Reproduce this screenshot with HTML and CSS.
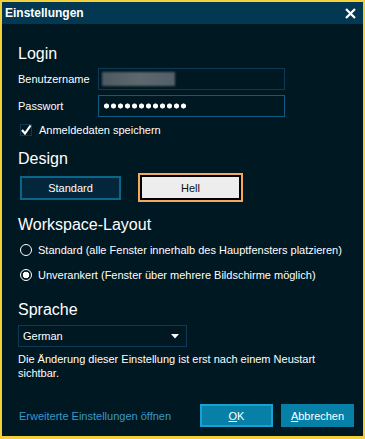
FILE: index.html
```html
<!DOCTYPE html>
<html lang="de">
  <head>
    <title>Einstellungen</title>
    <link rel="stylesheet" href="styles.css">
  </head>

  <body>
    <div class="window">
      <div class="titlebar">
        <span class="title">Einstellungen</span>
        <svg class="close" width="11" height="11" viewBox="0 0 11 11">
          <path d="M1 1 L10 10 M10 1 L1 10" stroke="#fff" stroke-width="2.2" />
        </svg>
      </div>

      <div class="content">
        <h2 class="heading first">Login</h2>
        <div class="form">
          <div class="form-row">
            <label for="username">Benutzername</label>
            <div class="input" id="username"><span class="blurred"></span></div>
          </div>
          <div class="form-row">
            <label for="password">Passwort</label>
            <div class="input focused" id="password"><span class="dots"></span></div>
          </div>
        </div>
        <div class="check-row">
          <span class="checkbox">
            <svg width="12" height="12" viewBox="0 0 12 12">
              <path d="M2 6 L5 9.5 L10.5 1.5" stroke="#fff" stroke-width="2.2" fill="none" />
            </svg>
          </span>
          <span>Anmeldedaten speichern</span>
        </div>

        <h2 class="heading">Design</h2>
        <div class="theme-row">
          <button class="theme-btn">Standard</button>
          <button class="theme-btn active">Hell</button>
        </div>

        <h2 class="heading workspace">Workspace-Layout</h2>
        <div class="radio-list">
          <div class="radio-row">
            <span class="radio"></span>
            <span>Standard (alle Fenster innerhalb des Hauptfensters platzieren)</span>
          </div>
          <div class="radio-row">
            <span class="radio checked"></span>
            <span>Unverankert (Fenster über mehrere Bildschirme möglich)</span>
          </div>
        </div>

        <h2 class="heading language">Sprache</h2>
        <div class="select">
          <span>German</span>
          <svg width="8" height="5" viewBox="0 0 8 5">
            <path d="M0 0 L8 0 L4 4.5 Z" fill="#fff" />
          </svg>
        </div>
        <p class="note">Die Änderung dieser Einstellung ist erst nach einem Neustart sichtbar.</p>

        <div class="footer">
          <a href="#" class="advanced">Erweiterte Einstellungen öffnen</a>
          <div class="actions">
            <button class="btn primary"><u>O</u>K</button>
            <button class="btn"><u>A</u>bbrechen</button>
          </div>
        </div>
      </div>
    </div>
  </body>
</html>
```

FILE: styles.css
```css
body {
  margin: 0;
  padding: 0;
  font-family: "Liberation Sans", Arial, sans-serif;
  font-size: 11px;
  color: #fff;
  background-color: #001822;
}

.window {
  box-sizing: border-box;
  width: 365px;
  height: 439px;
  border: 2px solid #f4d03a;
  border-bottom-width: 3px;
  background-color: #001822;
  display: flex;
  flex-direction: column;
}

.titlebar {
  height: 22px;
  background-color: #023851;
  display: flex;
  align-items: center;
  justify-content: space-between;
  padding: 0 7px 0 3px;
}

.title {
  font-size: 12px;
  font-weight: bold;
}

.content {
  flex: 1;
  display: flex;
  flex-direction: column;
  padding: 0 9px 9px 16px;
}

.heading {
  margin: 12px 0 0 0;
  font-size: 16px;
  font-weight: normal;
  line-height: 20px;
}

.heading.first {
  margin-top: 20px;
}

.heading.workspace {
  margin-top: 13px;
}

.heading.language {
  margin-top: 15px;
}

.form {
  margin-top: 4px;
  display: flex;
  flex-direction: column;
  gap: 5px;
}

.form-row {
  display: flex;
  align-items: center;
}

.form-row label {
  width: 80px;
}

.input {
  box-sizing: border-box;
  width: 187px;
  height: 22px;
  border: 1px solid #0c3a54;
  display: flex;
  align-items: center;
  padding-left: 3px;
}

.input.focused {
  border-color: #0b5b82;
}

.blurred {
  width: 73px;
  height: 14px;
  background: linear-gradient(90deg, #4c5a61, #5d686e 50%, #53606a);
  filter: blur(0.8px);
}

.dots {
  width: 84px;
  height: 6px;
  margin-left: 1px;
  background: radial-gradient(circle, #fff 2.3px, transparent 2.8px) 0 0 / 7px 6px;
}

.check-row {
  margin-top: 6px;
  height: 14px;
  display: flex;
  align-items: center;
  gap: 7px;
  padding-left: 2px;
}

.checkbox {
  box-sizing: border-box;
  width: 12px;
  height: 12px;
  border: 1px solid #0c3a54;
  display: flex;
}

.checkbox svg {
  margin: -1px;
}

.theme-row {
  margin-top: 4px;
  height: 29px;
  display: flex;
  align-items: center;
  gap: 17px;
  padding-left: 2px;
}

.theme-btn {
  box-sizing: border-box;
  width: 101px;
  height: 24px;
  border: 2px solid #0a6688;
  background-color: #04263a;
  color: #fff;
  font-family: "Liberation Sans", Arial, sans-serif;
  font-size: 11px;
  padding: 0;
}

.theme-btn.active {
  width: 105px;
  height: 29px;
  border: 2px solid #f2a95e;
  box-shadow: inset 0 0 0 2px #000;
  background-color: #ededed;
  color: #111;
}

.radio-list {
  margin-top: 5px;
  display: flex;
  flex-direction: column;
  gap: 5px;
  padding-left: 2px;
}

.radio-row {
  height: 20px;
  display: flex;
  align-items: center;
  gap: 6px;
}

.radio {
  box-sizing: border-box;
  width: 12px;
  height: 12px;
  border: 1px solid #fff;
  border-radius: 50%;
}

.radio.checked {
  background: radial-gradient(circle, #fff 3px, transparent 3.6px);
}

.select {
  box-sizing: border-box;
  margin-top: 5px;
  width: 169px;
  height: 22px;
  border: 1px solid #0c3a54;
  display: flex;
  align-items: center;
  justify-content: space-between;
  padding: 0 7px 0 4px;
}

.note {
  margin: 5px 0 0 0;
  line-height: 14px;
  width: 320px;
}

.footer {
  margin-top: auto;
  display: flex;
  align-items: center;
  justify-content: space-between;
}

.advanced {
  color: #3a98c8;
  text-decoration: none;
  padding-left: 1px;
}

.actions {
  display: flex;
  gap: 8px;
}

.btn {
  box-sizing: border-box;
  width: 73px;
  height: 23px;
  border: none;
  background-color: #0780a8;
  color: #fff;
  font-family: "Liberation Sans", Arial, sans-serif;
  font-size: 11px;
  padding: 0;
}

.btn.primary {
  border: 2px solid #17a2d2;
}
```
